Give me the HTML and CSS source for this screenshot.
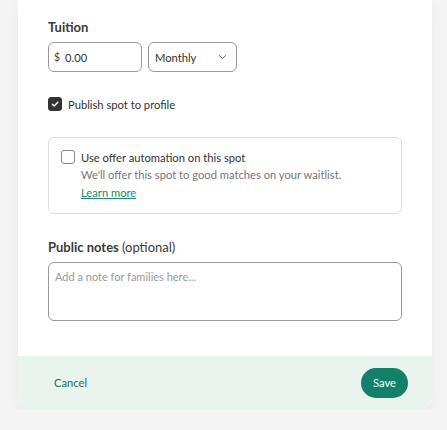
FILE: index.html
```html
<!DOCTYPE html>
<html>
<head>
<meta charset="utf-8">
<link rel="stylesheet" href="styles.css">
</head>
<body>
<div class="card">
  <div class="body">
    <div class="label">Tuition</div>
    <div class="tuition-row">
      <div class="field money"><span class="cur">$</span><span class="val">0.00</span></div>
      <div class="field select"><span>Monthly</span>
        <svg class="chev" width="9" height="6" viewBox="0 0 9 6"><path d="M1 1.2 L4.5 4.6 L8 1.2" fill="none" stroke="#666" stroke-width="1"/></svg>
      </div>
    </div>
    <div class="check-row">
      <span class="cb checked"><svg width="10" height="10" viewBox="0 0 10 10"><path d="M2.4 5.2 L4.2 7 L7.8 3.2" fill="none" stroke="#fff" stroke-width="1.4" stroke-linecap="round" stroke-linejoin="round"/></svg></span>
      <span class="check-text">Publish spot to profile</span>
    </div>
    <div class="auto-box">
      <span class="cb"></span>
      <div class="auto-text">
        <div class="auto-title">Use offer automation on this spot</div>
        <div class="auto-desc">We'll offer this spot to good matches on your waitlist.</div>
        <a class="learn" href="#">Learn more</a>
      </div>
    </div>
    <div class="label notes-label">Public notes <span class="opt">(optional)</span></div>
    <div class="textarea">Add a note for families here...</div>
  </div>
  <div class="footer">
    <span class="cancel">Cancel</span>
    <span class="save">Save</span>
  </div>
</div>
</body>
</html>
```
FILE: styles.css
```css
html, body {
  margin: 0;
  padding: 0;
  background: #f4f4f4;
  font-family: Lato, "Liberation Sans", sans-serif;
  color: #333;
}
.card {
  margin-left: 18px;
  width: 414px;
  background: #fff;
  border-radius: 0 0 12px 12px;
  box-shadow: 0 6px 12px rgba(0,0,0,0.05);
}
.body {
  padding: 19px 30px 35px 30px;
}
.label {
  font-size: 13px;
  font-weight: 700;
  color: #3a3a3a;
  line-height: 16px;
}
.tuition-row {
  display: flex;
  gap: 6px;
  margin-top: 7px;
}
.field {
  box-sizing: border-box;
  height: 30px;
  border: 1px solid #999;
  border-radius: 6px;
  display: flex;
  align-items: center;
  font-size: 11.2px;
  color: #333;
}
.money {
  width: 94px;
  padding-left: 5px;
}
.cur {
  font-size: 10.5px;
  margin-right: 5px;
  color: #444;
}
.select {
  width: 89px;
  padding: 0 9px 0 6px;
  justify-content: space-between;
}
.check-row {
  display: flex;
  align-items: center;
  gap: 6px;
  margin-top: 25px;
}
.cb {
  box-sizing: border-box;
  width: 14px;
  height: 14px;
  border-radius: 3px;
  border: 1px solid #888;
  display: flex;
  align-items: center;
  justify-content: center;
  flex: none;
}
.cb.checked {
  background: #333;
  border-color: #333;
}
.check-text {
  font-size: 11.2px;
  color: #333;
}
.auto-box {
  margin-top: 26px;
  border: 1px solid #ddd;
  border-radius: 6px;
  padding: 12px 12px 12px 12px;
  display: flex;
  gap: 6px;
  align-items: flex-start;
}
.auto-text {
  line-height: 18px;
}
.auto-title {
  font-size: 11.2px;
  color: #333;
  line-height: 16px;
}
.auto-desc {
  font-size: 11.2px;
  color: #777;
  line-height: 18px;
}
.learn {
  display: block;
  width: max-content;
  font-size: 11.2px;
  color: #1a8a6e;
  line-height: 17px;
  text-decoration: underline;
}
.notes-label {
  margin-top: 25px;
}
.opt {
  font-weight: 400;
}
.textarea {
  box-sizing: border-box;
  margin-top: 7px;
  height: 59px;
  border: 1px solid #999;
  border-radius: 6px;
  padding: 7px 6px;
  font-size: 11px;
  color: #999;
}
.footer {
  background: #eaf4ef;
  border-radius: 0 0 12px 12px;
  height: 53px;
  display: flex;
  align-items: center;
  justify-content: space-between;
  padding: 0 24px 0 36px;
}
.cancel {
  font-size: 11.2px;
  color: #2b6b57;
}
.save {
  background: #13806a;
  color: #fff;
  font-size: 11.2px;
  height: 30px;
  width: 47px;
  border-radius: 15px;
  display: flex;
  align-items: center;
  justify-content: center;
}
```
